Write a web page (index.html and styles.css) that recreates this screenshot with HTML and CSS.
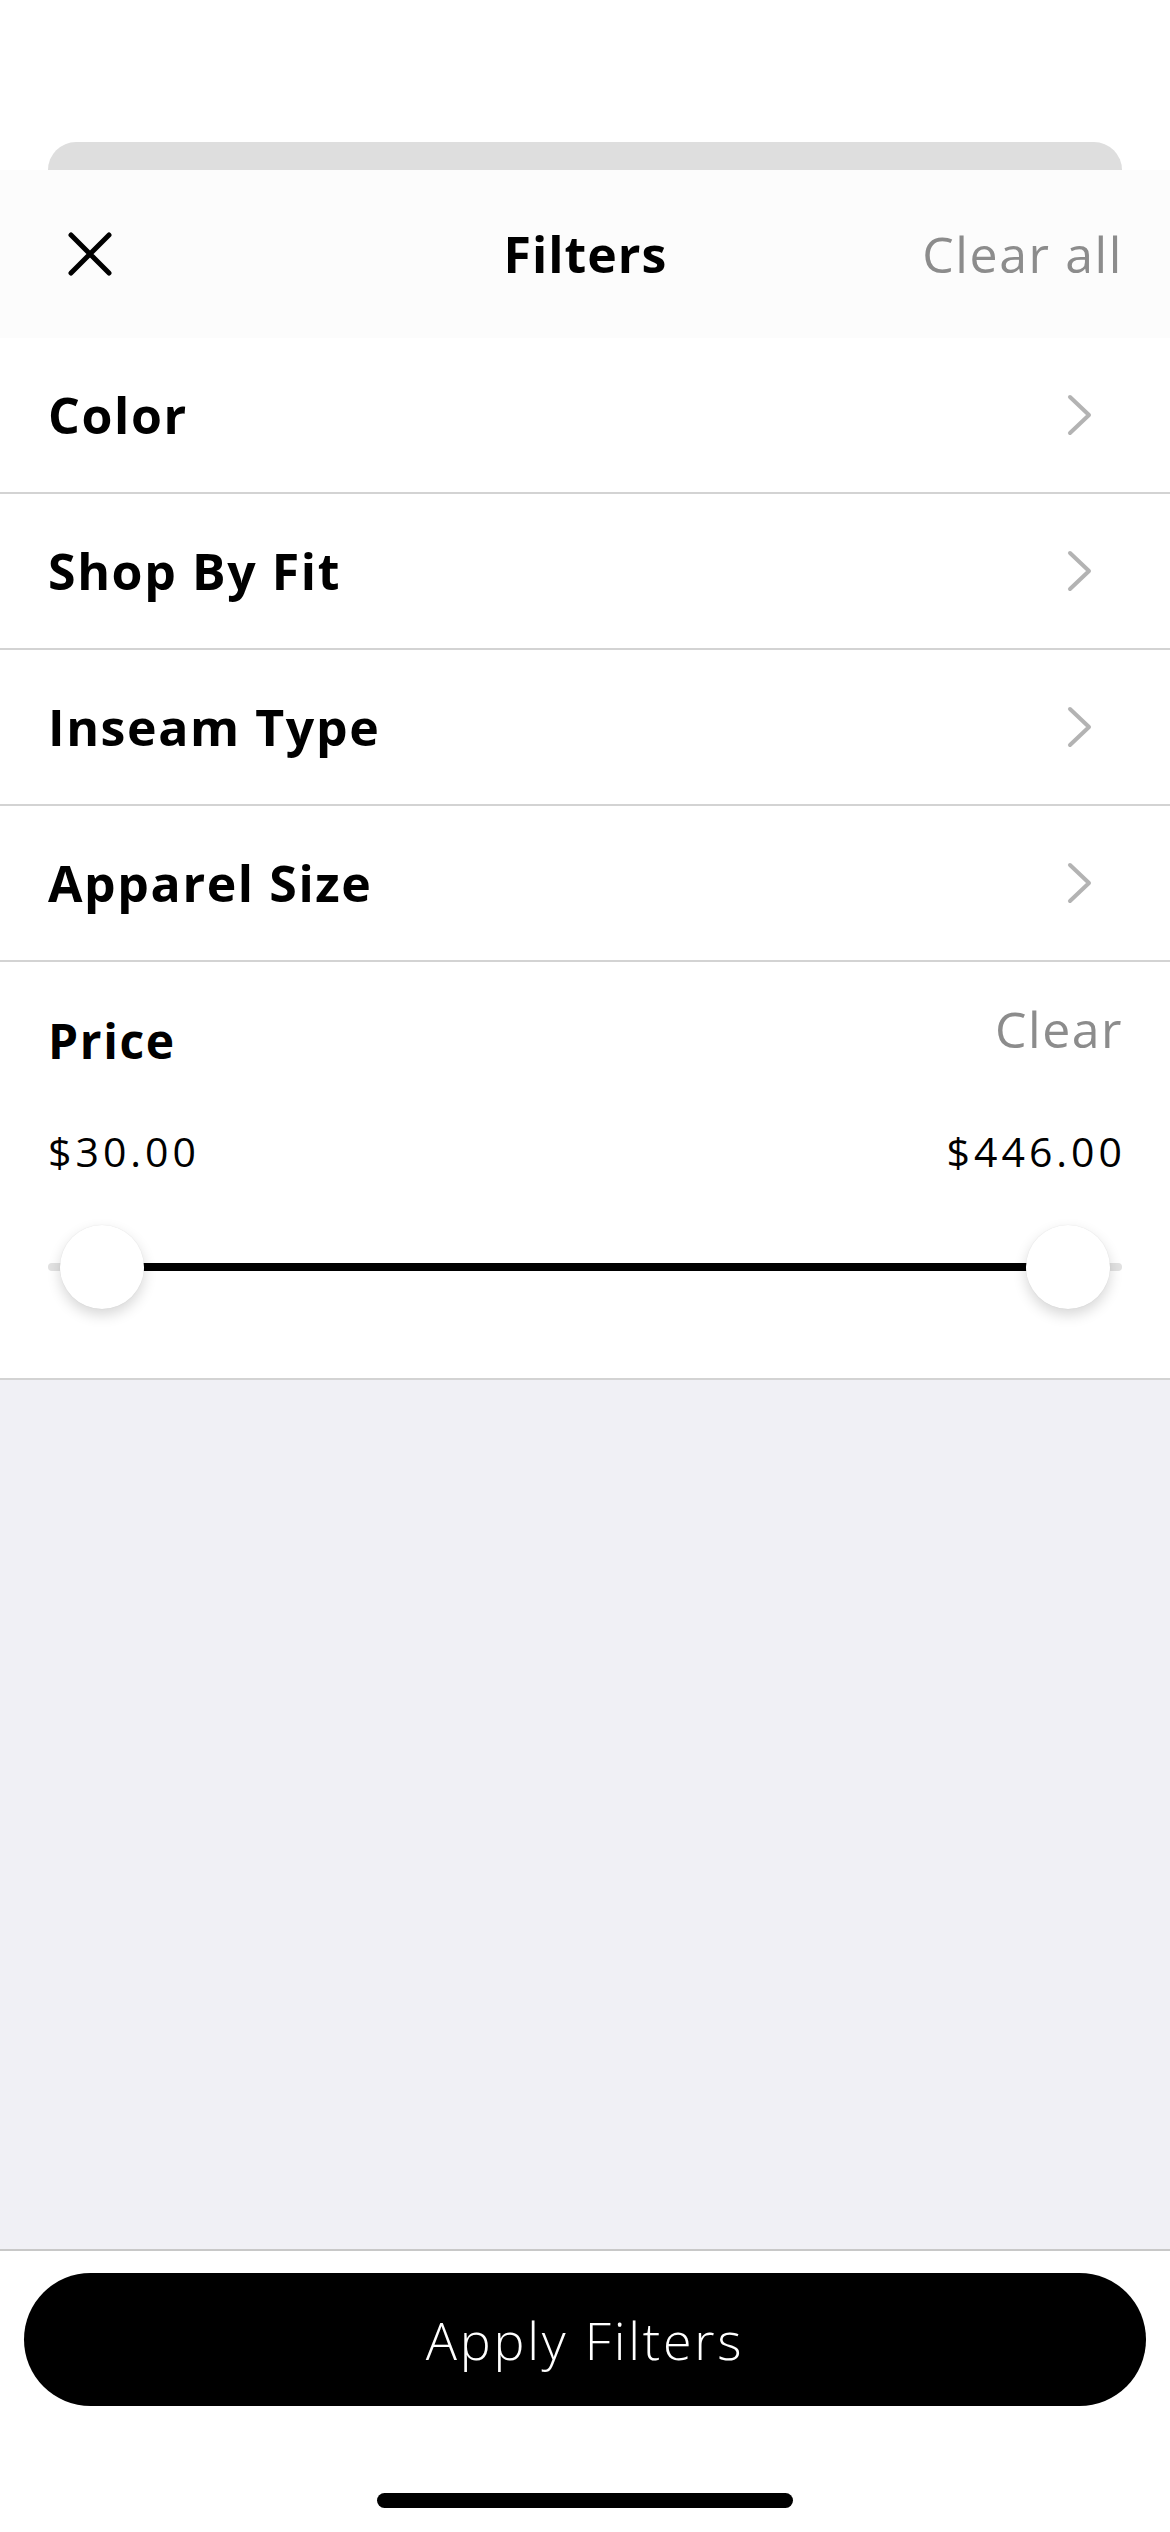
FILE: index.html
```html
<!DOCTYPE html>
<html>
<head>
<meta charset="utf-8">
<link rel="stylesheet" href="styles.css">
</head>
<body>
<div class="screen">
  <div class="top-space"></div>
  <div class="sheet-back"></div>
  <header class="header">
    <div class="close">
      <svg width="44" height="44" viewBox="0 0 44 44"><path d="M3 3 L41 41 M41 3 L3 41" stroke="#000" stroke-width="5" stroke-linecap="round" fill="none"/></svg>
    </div>
    <div class="title">Filters</div>
    <div class="clear-all">Clear all</div>
  </header>
  <div class="rows">
    <div class="row"><span class="row-label">Color</span><svg class="chev" width="26" height="42" viewBox="0 0 26 42"><path d="M3 3 L22 21 L3 39" stroke="#b3b3b3" stroke-width="4" stroke-linecap="round" stroke-linejoin="round" fill="none"/></svg></div>
    <div class="row"><span class="row-label">Shop By Fit</span><svg class="chev" width="26" height="42" viewBox="0 0 26 42"><path d="M3 3 L22 21 L3 39" stroke="#b3b3b3" stroke-width="4" stroke-linecap="round" stroke-linejoin="round" fill="none"/></svg></div>
    <div class="row"><span class="row-label">Inseam Type</span><svg class="chev" width="26" height="42" viewBox="0 0 26 42"><path d="M3 3 L22 21 L3 39" stroke="#b3b3b3" stroke-width="4" stroke-linecap="round" stroke-linejoin="round" fill="none"/></svg></div>
    <div class="row"><span class="row-label">Apparel Size</span><svg class="chev" width="26" height="42" viewBox="0 0 26 42"><path d="M3 3 L22 21 L3 39" stroke="#b3b3b3" stroke-width="4" stroke-linecap="round" stroke-linejoin="round" fill="none"/></svg></div>
  </div>
  <section class="price">
    <div class="price-head">
      <span class="price-title">Price</span>
      <span class="price-clear">Clear</span>
    </div>
    <div class="price-values">
      <span>$30.00</span>
      <span>$446.00</span>
    </div>
    <div class="slider">
      <div class="track"></div>
      <div class="track-active"></div>
      <div class="thumb thumb-left"></div>
      <div class="thumb thumb-right"></div>
    </div>
  </section>
  <div class="filler"></div>
  <footer class="footer">
    <button class="apply">Apply Filters</button>
    <div class="home-indicator"></div>
  </footer>
</div>
</body>
</html>
```
FILE: styles.css
```css
* { box-sizing: border-box; }
html, body { margin: 0; padding: 0; }
body {
  width: 1170px;
  height: 2532px;
  background: #fff;
  font-family: "Open Sans", "Liberation Sans", sans-serif;
  color: #000;
  overflow: hidden;
}
.screen {
  display: flex;
  flex-direction: column;
  height: 2532px;
}
.top-space { height: 142px; flex: none; }
.sheet-back {
  flex: none;
  height: 28px;
  margin: 0 48px;
  background: #dedede;
  border-radius: 30px 30px 0 0;
}
.header {
  flex: none;
  height: 168px;
  background: #fcfcfc;
  display: grid;
  grid-template-columns: 1fr auto 1fr;
  align-items: center;
  padding: 0 48px;
}
.close { display: flex; align-items: center; padding-left: 20px; }
.title {
  font-size: 50px;
  line-height: 60px;
  font-weight: 700;
  letter-spacing: 1px;
  text-align: center;
  margin-right: -1px;
}
.clear-all {
  font-size: 50px;
  line-height: 60px;
  font-weight: 400;
  letter-spacing: 1.6px;
  color: #8c8c8c;
  text-align: right;
  margin-right: -1px;
}
.rows { flex: none; display: flex; flex-direction: column; }
.row {
  height: 156px;
  display: flex;
  align-items: center;
  justify-content: space-between;
  padding: 0 77px 0 48px;
  border-bottom: 2px solid #d3d3d3;
}
.row-label {
  font-size: 50px;
  line-height: 60px;
  font-weight: 700;
  letter-spacing: 1.6px;
}
.chev { display: block; }
.price {
  flex: none;
  height: 418px;
  padding: 37px 48px 0;
  border-bottom: 2px solid #d3d3d3;
  display: flex;
  flex-direction: column;
}
.price-head {
  display: flex;
  justify-content: space-between;
  align-items: flex-start;
  height: 72px;
}
.price-title {
  font-size: 48px;
  line-height: 60px;
  font-weight: 700;
  letter-spacing: 1.6px;
  margin-top: 12px;
}
.price-clear {
  font-size: 50px;
  line-height: 60px;
  letter-spacing: 1.5px;
  color: #8c8c8c;
  margin-right: -1px;
}
.price-values {
  display: flex;
  justify-content: space-between;
  font-size: 41px;
  line-height: 50px;
  font-weight: 400;
  letter-spacing: 4px;
  margin-top: 55px;
  margin-right: -4px;
  height: 50px;
}
.slider {
  position: relative;
  height: 84px;
  margin-top: 49px;
}
.track {
  position: absolute;
  left: 0; right: 0;
  top: 38px;
  height: 8px;
  border-radius: 4px;
  background: #e2e2e2;
}
.track-active {
  position: absolute;
  left: 54px; right: 54px;
  top: 38px;
  height: 8px;
  background: #000;
}
.thumb {
  position: absolute;
  top: 0;
  width: 84px;
  height: 84px;
  border-radius: 50%;
  background: #fff;
  box-shadow: 0 6px 14px rgba(0,0,0,0.16), 0 0 1px rgba(0,0,0,0.12);
}
.thumb-left { left: 12px; }
.thumb-right { right: 12px; }
.filler {
  flex: 1;
  background: #f0f0f5;
  border-bottom: 2px solid #c8c8c8;
}
.footer {
  flex: none;
  height: 281px;
  background: #fff;
  display: flex;
  flex-direction: column;
  align-items: center;
  padding-top: 22px;
}
.apply {
  width: 1122px;
  height: 133px;
  border: none;
  border-radius: 67px;
  background: #000;
  color: #fff;
  font-family: "Open Sans", "Liberation Sans", sans-serif;
  font-size: 52px;
  font-weight: 300;
  letter-spacing: 2.8px;
  padding: 0;
}
.home-indicator {
  margin-top: 87px;
  width: 416px;
  height: 15px;
  border-radius: 8px;
  background: #000;
}
```
